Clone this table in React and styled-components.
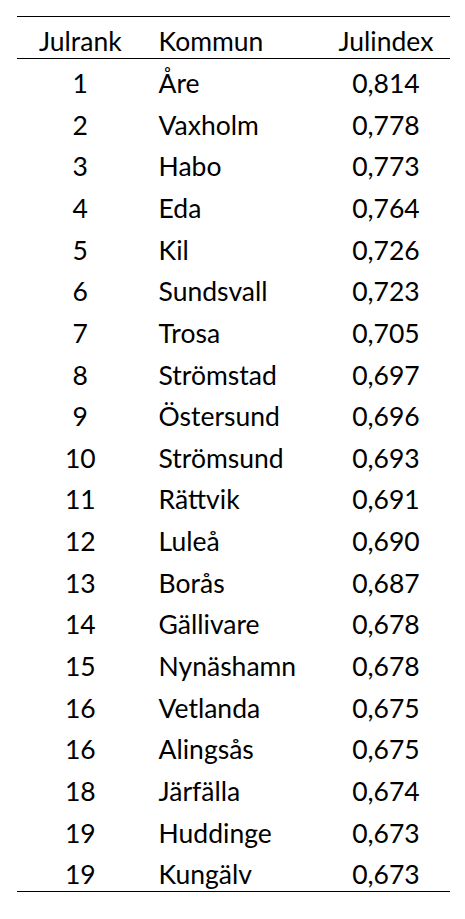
import React from "react";
import styled, { createGlobalStyle } from "styled-components";

const Global = createGlobalStyle`
  html, body { margin: 0; padding: 0; background: #fff; }
  body { font-family: Lato, "Open Sans", sans-serif; color: #000; }
`;

const Page = styled.div`
  padding: 16px 15px 27px 17px;
`;

const Table = styled.table`
  width: 433px;
  border-collapse: collapse;
  font-size: 26.5px;
  line-height: 1;
`;

const HeadRow = styled.tr`
  height: 42px;
  border-top: 1px solid #000;
  border-bottom: 1px solid #000;
`;

const Row = styled.tr`
  height: 41.65px;
  border-bottom: ${(p) => (p.$last ? "1px solid #000" : "none")};
`;

const Cell = styled.td`
  padding: 8px 0 0 0;
  width: ${(p) => p.$w}px;
  text-align: ${(p) => p.$align || "center"};
  padding-left: ${(p) => p.$pl || 0}px;
  vertical-align: middle;
  font-weight: 400;
  white-space: nowrap;
`;

const data = [
  [1, "Åre", "0,814"],
  [2, "Vaxholm", "0,778"],
  [3, "Habo", "0,773"],
  [4, "Eda", "0,764"],
  [5, "Kil", "0,726"],
  [6, "Sundsvall", "0,723"],
  [7, "Trosa", "0,705"],
  [8, "Strömstad", "0,697"],
  [9, "Östersund", "0,696"],
  [10, "Strömsund", "0,693"],
  [11, "Rättvik", "0,691"],
  [12, "Luleå", "0,690"],
  [13, "Borås", "0,687"],
  [14, "Gällivare", "0,678"],
  [15, "Nynäshamn", "0,678"],
  [16, "Vetlanda", "0,675"],
  [16, "Alingsås", "0,675"],
  [18, "Järfälla", "0,674"],
  [19, "Huddinge", "0,673"],
  [19, "Kungälv", "0,673"],
];

export default function App() {
  return (
    <>
      <Global />
      <Page>
        <Table>
          <thead>
            <HeadRow>
              <Cell as="th" $w={133}>Julrank</Cell>
              <Cell as="th" $w={167} $align="left" $pl={15}>Kommun</Cell>
              <Cell as="th" $w={133}>Julindex</Cell>
            </HeadRow>
          </thead>
          <tbody>
            {data.map(([r, k, v], i) => (
              <Row key={i} $last={i === data.length - 1}>
                <Cell $w={133}>{r}</Cell>
                <Cell $w={167} $align="left" $pl={15}>{k}</Cell>
                <Cell $w={133}>{v}</Cell>
              </Row>
            ))}
          </tbody>
        </Table>
      </Page>
    </>
  );
}
